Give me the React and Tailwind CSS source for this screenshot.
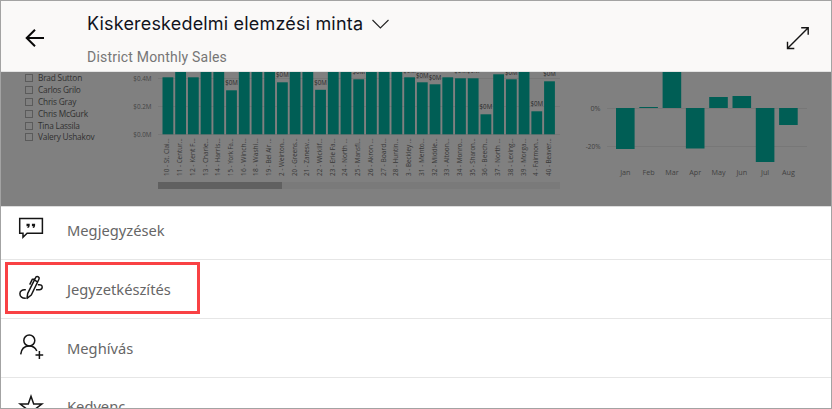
import React from "react";

// Visible height of each store bar above the $0.0M baseline; labels sit over the shorter bars.
const stores = [
  ["10 - St. Clai...", 57], ["11 - Centur...", 63], ["12 - Kent F...", 57], ["13 - Charle...", 63],
  ["14 - Harris...", 63], ["15 - York Fa...", 44, 83], ["16 - Winch...", 63], ["18 - Washi...", 63],
  ["19 - Bel Air ...", 63], ["2 - Weirton...", 52, 75], ["20 - Greens...", 63], ["21 - Zanesv...", 63],
  ["22 - Wicklif...", 44.5, 82.5], ["23 - Erie Fa...", 63], ["24 - North ...", 63], ["25 - Mansfi...", 55, 72],
  ["26 - Akron ...", 63], ["27 - Board...", 63], ["28 - Huntin...", 63], ["3 - Beckley ...", 57, 70.5],
  ["31 - Mento...", 52, 75.5], ["32 - Middle...", 50, 78], ["33 - Altoon...", 57], ["34 - Monro...", 56, 71],
  ["35 - Sharon...", 56, 71], ["36 - Beech...", 20, 107], ["37 - North ...", 60], ["38 - Lexing...", 55, 72.5],
  ["39 - Morga...", 63], ["4 - Fairmon...", 23, 104], ["40 - Beaver...", 53, 74],
];

const months = [
  ["Jan", 108, 41], ["Feb", 107, 1], ["Mar", 71, 37], ["Apr", 108, 40.5],
  ["May", 97, 11], ["Jun", 96, 12], ["Jul", 108, 54], ["Aug", 108, 17],
];

const people = ["Brad Sutton", "Carlos Grilo", "Chris Gray", "Chris McGurk", "Tina Lassila", "Valery Ushakov"];

function StoreChart() {
  return (
    <svg className="block h-[134px] w-[440px] shrink-0 font-['Open_Sans',sans-serif]" viewBox="130 72 440 134">
      <g stroke="#777777" strokeWidth="1">
        <path d="M158 78.5H560M158 106.5H560M158 134.5H560" />
      </g>
      <g fill="#454545" fontSize="7.2" textAnchor="end">
        <text x="151.5" y="80.5" textLength="18.2" lengthAdjust="spacingAndGlyphs">$0.4M</text>
        <text x="151.5" y="108.5" textLength="18.2" lengthAdjust="spacingAndGlyphs">$0.2M</text>
        <text x="151.5" y="136.5" textLength="18.2" lengthAdjust="spacingAndGlyphs">$0.0M</text>
      </g>
      {stores.map(([name, height, label], i) => {
        const x = 162.5 + i * 12.72;
        return (
          <g key={name}>
            <rect x={x} y={134.3 - height} width="10.8" height={height} fill="#005e55" />
            <text
              transform={`translate(${x + 6.9} 138.3) rotate(-90)`}
              textAnchor="end"
              textLength="37.6"
              lengthAdjust="spacingAndGlyphs"
              fontSize="7.2"
              fill="#383838"
            >
              {name}
            </text>
            {label && (
              <text
                x={x + 5.4}
                y={label + 2}
                textAnchor="middle"
                textLength="12.6"
                lengthAdjust="spacingAndGlyphs"
                fontSize="7"
                fill="#292929"
              >
                $0M
              </text>
            )}
          </g>
        );
      })}
      <rect x="158" y="182" width="402" height="7" fill="#7a7a7a" />
      <rect x="158" y="182" width="124" height="7" fill="#606060" />
    </svg>
  );
}

function MonthChart() {
  return (
    <svg className="block h-[134px] w-[260px] shrink-0 font-['Open_Sans',sans-serif]" viewBox="570 72 260 134">
      <path d="M607 108.5H807M607 146.5H807" stroke="#777777" />
      <g fill="#404040" fontSize="7.2">
        <text x="600.5" y="110.5" textAnchor="end">0%</text>
        <text x="600.5" y="149" textAnchor="end" textLength="14.8" lengthAdjust="spacingAndGlyphs">-20%</text>
        {months.map(([name, y, height], i) => (
          <g key={name}>
            <rect x={616 + i * 23.3} y={y} width="18.6" height={height} fill="#005e55" />
            <text x={625.3 + i * 23.3} y="175.3" textAnchor="middle">{name}</text>
          </g>
        ))}
      </g>
    </svg>
  );
}

const iconClass = "block h-[30px] w-[30px] shrink-0";

function CommentIcon() {
  return (
    <svg className={iconClass} viewBox="16 213 30 30" fill="none" stroke="#151515" strokeWidth="1.5">
      <path d="M19.7 218.6H42.4V233.3H27.1L23 237.3V233.3H19.7Z" />
      <path d="M26.5 223.7h3.2v1.7q0 2-1.8 2.7l-.7-.7q.8-.6.8-1.2h-1.5ZM31.9 223.7h3.2v1.7q0 2-1.8 2.7l-.7-.7q.8-.6.8-1.2h-1.5Z" fill="#151515" stroke="none" />
    </svg>
  );
}

function AnnotateIcon() {
  return (
    <svg className={iconClass} viewBox="16 273 30 30" fill="none" stroke="#151515" strokeWidth="1.5" strokeLinejoin="round">
      <path d="M27 298.4L27.7 293.4L35.2 278.4Q36.1 276 38 276.7Q39.8 277.5 38.8 279.5L31.3 295Z" />
      <path d="M34.4 280.2L37.7 281.8M34.8 279.2L32.4 279.2L29.7 284.6" />
      <path d="M25.8 289.8C22.2 289.2 19.9 291 19.9 293.7C19.9 296.8 22.2 298.4 25.8 298.2M37.8 284.8C40.8 284.2 42.4 285.4 42.2 287.3C42 289.4 39.8 290.1 36 289.8" />
    </svg>
  );
}

function InviteIcon() {
  return (
    <svg className={iconClass} viewBox="16 332 30 30" fill="none" stroke="#151515" strokeWidth="1.5">
      <circle cx="29.3" cy="340.5" r="5.5" />
      <path d="M20.7 354.4C21.3 348.8 24.7 346 29.2 346C32.7 346 35.4 347.8 36.8 351M35.5 354.9H43.2M39.4 351.1V358.9" />
    </svg>
  );
}

function StarIcon() {
  return (
    <svg className={iconClass} viewBox="16 392 30 30" fill="none" stroke="#151515" strokeWidth="1.5">
      <path d="M31 396.3L33.7 404.1H41.8L35.3 409L37.8 417L31 412.2L24.2 417L26.7 409L20.2 404.1H28.3Z" />
    </svg>
  );
}

function Row({ icon, children, className, textClass }) {
  return (
    <div className={`flex shrink-0 items-start border-[#e6e6e6] pl-[15px] ${className}`}>
      {icon}
      <span className={`ml-[21px] text-[14.7px] leading-[24px] text-[#666666] ${textClass}`}>{children}</span>
    </div>
  );
}

export default function App() {
  return (
    <main className="relative flex h-[409px] w-[832px] flex-col overflow-hidden border border-[#a3a3a3] bg-white font-['Open_Sans',sans-serif]">
      <header className="flex h-[71px] shrink-0 items-start border-b border-[#e3e3e3] bg-[#faf9f8]">
        <svg className="ml-[22px] mt-[25px] h-6 w-6 shrink-0" viewBox="23 26 24 24" fill="none" stroke="#080808" strokeWidth="2">
          <path d="M44 38H27M35 29.7L26.7 38L35 46.3" />
        </svg>
        <div className="ml-[40px] mt-[11px] flex-1 font-[Roboto,sans-serif]">
          <div className="flex items-center">
            <h1 className="whitespace-nowrap font-['Inter',sans-serif] text-[18px] leading-[24px] tracking-[0.18px] text-[#11131c]">Kiskereskedelmi elemzési minta</h1>
            <svg className="ml-[7px] h-[12px] w-[20px]" viewBox="370 18 20 12" fill="none" stroke="#222" strokeWidth="1.1">
              <path d="M372.5 20L380.4 28L388.5 20" />
            </svg>
          </div>
          <p className="mt-[12px] text-[14px] leading-[18px] tracking-[0.2px] text-[#767676]">District Monthly Sales</p>
        </div>
        <svg className="mr-[18px] mt-[22px] h-[30px] w-[30px] shrink-0" viewBox="783 23 30 30" fill="none" stroke="#151515" strokeWidth="1.4">
          <path d="M787.7 48.3L808 28M801.2 27.8H808.2V34.8M787.5 41.8V48.5H794.3" />
        </svg>
      </header>

      <section className="flex h-[134px] shrink-0 overflow-hidden bg-[#808080]">
        <ul className="flex w-[129px] shrink-0 flex-col pl-[24px]">
          {people.map((name) => (
            <li key={name} className="flex h-[11.9px] shrink-0 items-center gap-[5px] whitespace-nowrap text-[8.3px] leading-[12px] tracking-[-0.2px] text-[#303030]">
              <span className="h-[8px] w-[8px] border border-[#5b5b5b]" />
              {name}
            </li>
          ))}
        </ul>
        <StoreChart />
        <MonthChart />
      </section>

      <nav className="flex flex-1 flex-col overflow-hidden border-t border-[#dddddd] font-['Noto_Sans',sans-serif]">
        <Row icon={<CommentIcon />} className="h-[53px] border-b pt-[6px]" textClass="mt-[5px]">Megjegyzések</Row>
        <Row icon={<AnnotateIcon />} className="h-[59px] border-b pt-[13px]" textClass="mt-[4px]">Jegyzetkészítés</Row>
        <Row icon={<InviteIcon />} className="h-[59px] border-b pt-[13px]" textClass="mt-[4px]">Meghívás</Row>
        <Row icon={<StarIcon />} className="h-[59px] pt-[14px]" textClass="mt-[2px]">Kedvenc</Row>
      </nav>
      <div className="pointer-events-none absolute left-[4px] top-[261px] h-[52px] w-[195px] border-[3px] border-[#f94144]" />
    </main>
  );
}
